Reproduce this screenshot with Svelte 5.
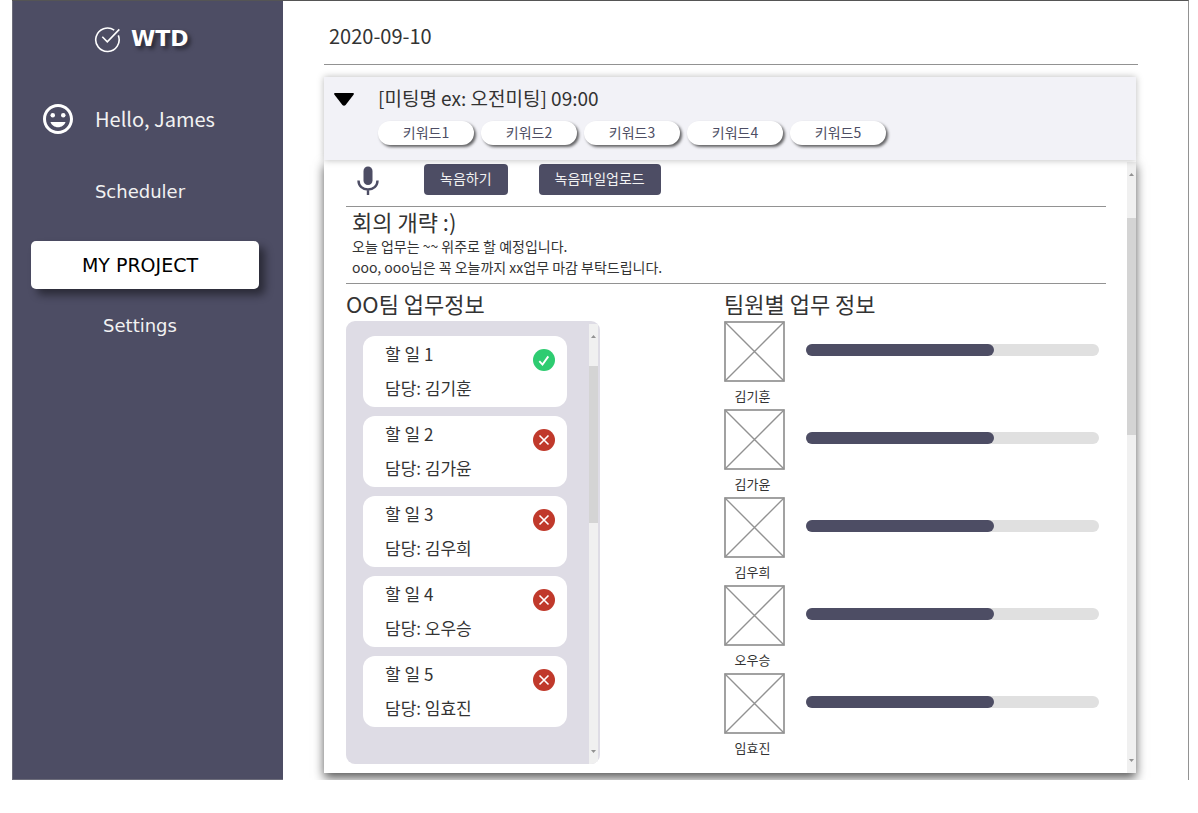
<script>
  const keywords = ['키워드1', '키워드2', '키워드3', '키워드4', '키워드5'];
  const tasks = [
    { title: '할 일 1', owner: '김기훈', done: true },
    { title: '할 일 2', owner: '김가윤', done: false },
    { title: '할 일 3', owner: '김우희', done: false },
    { title: '할 일 4', owner: '오우승', done: false },
    { title: '할 일 5', owner: '임효진', done: false }
  ];
  const members = [
    { name: '김기훈', progress: 64 },
    { name: '김가윤', progress: 64 },
    { name: '김우희', progress: 64 },
    { name: '오우승', progress: 64 },
    { name: '임효진', progress: 64 }
  ];
</script>

<div class="app">
  <aside class="sidebar">
    <a class="brand" href="#home">
      <svg width="27" height="27" viewBox="0 0 27 27" fill="none" stroke="#fff" stroke-width="1.6" aria-hidden="true">
        <path d="M20.2 4.2A11.7 11.7 0 1 0 24.3 9.4" />
        <path d="M8.3 10.8l5 5.1L25.3 3.4" />
      </svg>
      <span>WTD</span>
    </a>
    <div class="user">
      <svg width="36" height="36" viewBox="0 0 24 24" fill="#fff" aria-hidden="true">
        <path d="M11.99 2C6.47 2 2 6.48 2 12s4.47 10 9.99 10C17.52 22 22 17.52 22 12S17.52 2 11.99 2zM12 20c-4.42 0-8-3.58-8-8s3.58-8 8-8 8 3.58 8 8-3.58 8-8 8z" />
        <circle cx="8.5" cy="9.5" r="1.5" />
        <circle cx="15.5" cy="9.5" r="1.5" />
        <path d="M7 14h10c-.7 2.100-2.600 3.500-5 3.500S7.700 16.100 7 14z" />
      </svg>
      <span>Hello, James</span>
    </div>
    <nav>
      <a href="#scheduler">Scheduler</a>
      <a class="active" href="#project" aria-current="page">MY PROJECT</a>
      <a href="#settings">Settings</a>
    </nav>
  </aside>

  <main>
    <h1>2020-09-10</h1>

    <section class="meeting">
      <header>
        <button class="toggle" aria-label="접기">
          <svg width="20" height="13" viewBox="0 0 20 13" aria-hidden="true">
            <path d="M1 0h18q1.500 0.400 0.500 1.800L11.600 12q-1.600 1.600-3.200 0L0.500 1.800Q-0.500 0.400 1 0z" />
          </svg>
        </button>
        <div>
          <h2>[미팅명 ex: 오전미팅] 09:00</h2>
          <ul class="keywords">
            {#each keywords as keyword}
              <li>{keyword}</li>
            {/each}
          </ul>
        </div>
      </header>

      <div class="body">
        <div class="content">
          <div class="record">
            <svg width="22" height="30" viewBox="0 0 22 30" aria-hidden="true">
              <rect x="6.500" y="0.500" width="9" height="18.500" rx="4.500" fill="#4d4d64" />
              <path d="M1.500 14.500c0 5.500 4.300 9 9.500 9s9.500-3.500 9.500-9M11 23.500V29" fill="none" stroke="#4d4d64" stroke-width="2.400" />
            </svg>
            <button>녹음하기</button>
            <button>녹음파일업로드</button>
          </div>

          <div class="summary">
            <h3>회의 개략 :)</h3>
            <p>오늘 업무는 ~~ 위주로 할 예정입니다.</p>
            <p>ooo, ooo님은 꼭 오늘까지 xx업무 마감 부탁드립니다.</p>
          </div>

          <div class="columns">
            <section class="team">
              <h3>OO팀 업무정보</h3>
              <div class="tasks">
                <ul>
                  {#each tasks as task}
                    <li>
                      <div>
                        <strong>{task.title}</strong>
                        <span>담당: {task.owner}</span>
                      </div>
                      <svg width="22" height="22" viewBox="0 0 22 22" fill="none" stroke="#fff" role="img" aria-label={task.done ? '완료' : '미완료'}>
                        {#if task.done}
                          <circle cx="11" cy="11" r="11" fill="#2ecc71" stroke="none" />
                          <path d="M6.300 12.200l3.200 3.400 5.800-8.200" stroke-width="1.900" />
                        {:else}
                          <circle cx="11" cy="11" r="11" fill="#c0392b" stroke="none" />
                          <path d="M6.500 6.500l9 9M15.500 6.500l-9 9" stroke-width="1.600" />
                        {/if}
                      </svg>
                    </li>
                  {/each}
                </ul>
                <div class="scrollbar" aria-hidden="true">
                  <svg width="5" height="3" viewBox="0 0 5 3"><path d="M2.500 0L5 3H0z" /></svg>
                  <i></i>
                  <svg width="5" height="3" viewBox="0 0 5 3"><path d="M2.500 3L5 0H0z" /></svg>
                </div>
              </div>
            </section>

            <section class="members">
              <h3>팀원별 업무 정보</h3>
              <ul>
                {#each members as member}
                  <li>
                    <figure>
                      <svg width="61" height="61" viewBox="0 0 61 61" fill="none" stroke="#929292" aria-hidden="true">
                        <path d="M1 1l59 59M60 1L1 60" stroke-width="1.400" />
                        <rect x="1" y="1" width="59" height="59" stroke-width="1.700" />
                      </svg>
                      <figcaption>{member.name}</figcaption>
                    </figure>
                    <div class="track" role="progressbar" aria-label={member.name} aria-valuenow={member.progress} aria-valuemin="0" aria-valuemax="100">
                      <div class="fill" style="width: {member.progress}%"></div>
                    </div>
                  </li>
                {/each}
              </ul>
            </section>
          </div>
        </div>

        <div class="scrollbar page" aria-hidden="true">
          <svg width="5" height="3" viewBox="0 0 5 3"><path d="M2.500 0L5 3H0z" /></svg>
          <i></i>
          <svg width="5" height="3" viewBox="0 0 5 3"><path d="M2.500 3L5 0H0z" /></svg>
        </div>
      </div>
    </section>
  </main>
</div>

<style>
  :global(body) {
    margin: 0;
    background: #fff;
  }

  .app {
    display: flex;
    box-sizing: border-box;
    margin: 0 9px 0 12px;
    border-top: 1px solid #555;
    border-right: 1px solid #929292;
    font-family: 'Noto Sans CJK KR', sans-serif;
    color: #333;
  }

  h1,
  h2,
  h3,
  p,
  ul,
  figure {
    margin: 0;
    padding: 0;
    font-weight: 400;
    list-style: none;
  }

  button {
    border: 0;
    padding: 0;
    font: inherit;
    cursor: pointer;
  }

  svg {
    display: block;
    flex: none;
  }

  .sidebar {
    flex: none;
    box-sizing: border-box;
    width: 271px;
    padding: 24px 24px 0 18px;
    border: 1px solid #6c6c7a;
    border-width: 0 0 1px 1px;
    background: #4d4d64;
    color: #f2f2f2;
  }

  .brand {
    display: flex;
    align-items: center;
    gap: 10px;
    height: 28px;
    padding-left: 63px;
    color: #fff;
    font: 700 22px/30px 'DejaVu Sans', sans-serif;
    text-decoration: none;
    text-shadow: 3px 3px 4px rgba(0, 0, 0, 0.5);
  }

  .user {
    display: flex;
    align-items: center;
    gap: 19px;
    height: 36px;
    margin-top: 48px;
    padding-left: 9px;
    font-size: 20px;
    line-height: 30px;
  }

  nav {
    display: flex;
    flex-direction: column;
    margin-top: 39px;
    font: 18px/32px 'DejaVu Sans', sans-serif;
  }

  nav a {
    padding-right: 10px;
    color: inherit;
    text-align: center;
    text-decoration: none;
  }

  nav .active {
    margin: 33px 0 21px;
    border-radius: 5px;
    background: #fff;
    box-shadow: 6px 6px 8px rgba(0, 0, 0, 0.45);
    color: #000;
    font-size: 19px;
    line-height: 48px;
  }

  main {
    flex: 1;
    min-width: 0;
    padding: 20px 50px 7px 41px;
  }

  h1 {
    margin-bottom: 12px;
    padding: 0 0 14px 5px;
    border-bottom: 1px solid #929292;
    font-size: 20px;
    line-height: 29px;
  }

  .meeting {
    margin-right: 2px;
  }

  .meeting > header {
    display: flex;
    align-items: flex-start;
    position: relative;
    gap: 24px;
    padding: 8px 10px 15px;
    background: #f2f2f7;
    box-shadow: 0 0 7px rgba(0, 0, 0, 0.28);
  }

  .toggle {
    margin-top: 8px;
    background: none;
  }

  h2 {
    font-size: 19px;
    line-height: 26px;
  }

  .keywords {
    display: flex;
    flex-wrap: wrap;
    gap: 7px;
    margin-top: 10px;
  }

  .keywords li {
    box-sizing: border-box;
    width: 96px;
    height: 24px;
    border-radius: 12px;
    background: #fff;
    box-shadow: 2px 2px 3px rgba(0, 0, 0, 0.6);
    color: #4d4d64;
    font-size: 14px;
    line-height: 22px;
    text-align: center;
  }

  .body {
    display: flex;
    justify-content: space-between;
    padding-top: 2px;
    background: #fff;
    box-shadow: 0 5px 10px rgba(0, 0, 0, 0.65);
  }

  .content {
    flex: 1;
    min-width: 0;
    padding: 2px 21px 9px 22px;
  }

  .record {
    display: flex;
    padding: 0 0 10px 11px;
    border-bottom: 1px solid #929292;
  }

  .record svg {
    margin-top: 2px;
  }

  .record button {
    display: flex;
    justify-content: center;
    height: 31px;
    margin-left: 31px;
    padding: 0 16px;
    border-radius: 4px;
    background: #4d4d64;
    color: #f2f2f2;
    font-size: 14px;
    line-height: 28px;
  }

  .record svg + button {
    margin-left: 45px;
  }

  h3 {
    height: 32px;
    font-size: 22px;
    line-height: 28px;
  }

  .summary {
    padding: 0 0 5px 6px;
    border-bottom: 1px solid #929292;
  }

  .summary h3 {
    height: 29px;
  }

  .summary p {
    font-size: 14px;
    line-height: 21px;
  }

  .columns {
    display: grid;
    grid-template-columns: 254px minmax(0, 375px);
    justify-content: space-between;
    gap: 24px;
    padding: 5px 7px 0 0;
  }

  .tasks {
    display: flex;
    justify-content: space-between;
    overflow: hidden;
    border-radius: 9px;
    background: #dedce5;
  }

  .tasks ul {
    display: flex;
    flex-direction: column;
    gap: 9px;
    flex: 1;
    padding: 15px 22px 37px 17px;
  }

  .tasks li {
    display: flex;
    justify-content: space-between;
    align-items: flex-start;
    padding: 4px 12px 5px 22px;
    border-radius: 12px;
    background: #fff;
  }

  .tasks li > svg {
    margin-top: 9px;
  }

  .tasks strong,
  .tasks span {
    display: block;
    font-weight: 400;
    font-size: 17px;
    line-height: 28px;
  }

  .tasks span {
    margin-top: 6px;
  }

  .scrollbar {
    display: flex;
    flex-direction: column;
    justify-content: space-between;
    align-items: center;
    width: 9px;
    margin: 3px 2px 0 0;
    padding: 11px 0;
    box-sizing: border-box;
    background: #f0f0f0;
    fill: #929292;
  }

  .scrollbar i {
    width: 100%;
    height: 157px;
    margin: 28px 0 auto;
    background: #d4d4d4;
  }

  .page {
    margin: 0;
  }

  .page i {
    height: 217px;
    margin-top: 42px;
  }

  .members ul {
    display: flex;
    flex-direction: column;
    gap: 2px;
  }

  .members li {
    display: flex;
    gap: 21px;
    height: 86px;
  }

  figcaption {
    padding-right: 4px;
    margin-top: 4px;
    font-size: 13px;
    line-height: 20px;
    text-align: center;
  }

  .track {
    flex: 1;
    height: 12px;
    margin-top: 23px;
    border-radius: 6px;
    background: #e0e0e0;
  }

  .fill {
    height: 100%;
    border-radius: 6px;
    background: #4d4d64;
  }
</style>
